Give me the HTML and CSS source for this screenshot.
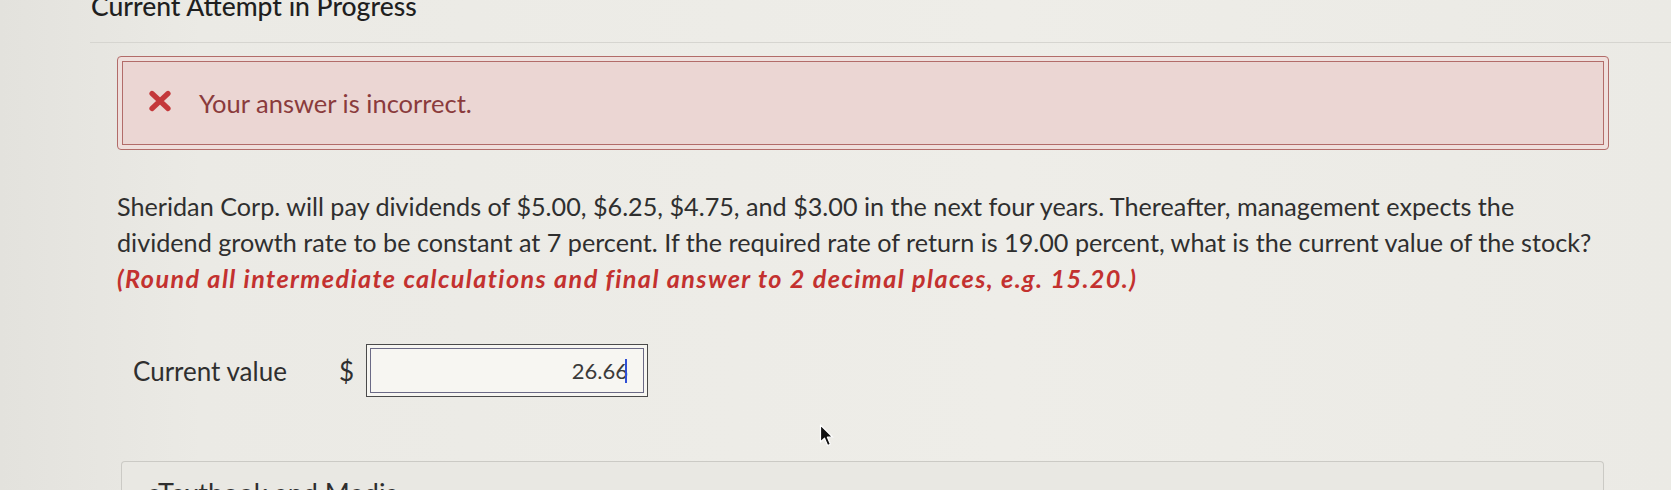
FILE: index.html
```html
<!DOCTYPE html>
<html lang="en">
<head>
<meta charset="utf-8">
<title>Current Attempt in Progress</title>
<link rel="stylesheet" href="styles.css">
</head>
<body>
<div class="page">
  <h1 class="title">Current Attempt in Progress</h1>
  <div class="rule"></div>
  <div class="content">
    <div class="alert">
      <div class="alert-inner">
        <svg class="x-icon" width="24" height="22" viewBox="0 0 24 22" aria-hidden="true">
          <path d="M4 3.5 L20 18.5 M20 3.5 L4 18.5" stroke="#c4383b" stroke-width="5.2" stroke-linecap="round" fill="none"/>
        </svg>
        <span class="alert-text">Your answer is incorrect.</span>
      </div>
    </div>
    <p class="question">Sheridan Corp. will pay dividends of $5.00, $6.25, $4.75, and $3.00 in the next four years. Thereafter, management expects the dividend growth rate to be constant at 7 percent. If the required rate of return is 19.00 percent, what is the current value of the stock?<br><em class="hint">(Round all intermediate calculations and final answer to 2 decimal places, e.g. 15.20.)</em></p>
    <div class="answer-row">
      <span class="label">Current value</span>
      <span class="currency">$</span>
      <div class="input">
        <div class="input-inner"><span class="value">26.66</span><span class="caret"></span></div>
      </div>
    </div>
    <div class="media">
      <span class="media-title">eTextbook and Media</span>
    </div>
  </div>
  <svg class="pointer" width="16" height="24" viewBox="0 0 16 24" aria-hidden="true">
    <path d="M1.5 1 L1.5 18 L5.5 14.2 L8.6 21.5 L11.4 20.3 L8.4 13.2 L13.8 13.2 Z" fill="#111" stroke="#fff" stroke-width="1.2" stroke-linejoin="round"/>
  </svg>
</div>
</body>
</html>
```

FILE: styles.css
```css
html, body {
  margin: 0;
  padding: 0;
}
body {
  background: linear-gradient(90deg, #e3e2dd 0%, #ebeae5 12%, #eeede8 60%, #ebeae5 100%);
  font-family: Lato, "Open Sans", "Noto Sans", sans-serif;
  color: #333;
  width: 1671px;
  height: 490px;
  overflow: hidden;
}
.page {
  position: relative;
  padding-left: 91px;
  height: 490px;
  overflow: hidden;
}
.title {
  margin: -13px 0 0 0;
  font-size: 26.5px;
  line-height: 38px;
  font-weight: 500;
  color: #1f1f1f;
}
.rule {
  margin-top: 17px;
  margin-left: -1px;
  height: 1px;
  background: #d6d5d0;
}
.content {
  margin-left: 26px;
  width: 1492px;
}
.alert {
  margin-top: 13px;
  height: 94px;
  box-sizing: border-box;
  border: 1.5px solid #b26c69;
  border-radius: 4px;
  background: #efdfdc;
  padding: 4px;
}
.alert-inner {
  height: 100%;
  box-sizing: border-box;
  border: 1.5px solid #b26c69;
  background: #ebd6d3;
  display: flex;
  align-items: center;
  padding-left: 25px;
  gap: 27px;
}
.x-icon {
  flex: none;
  margin-top: -4px;
}
.alert-text {
  font-size: 25.5px;
  color: #8a3b3c;
}
.question {
  margin: 38px 0 0 0;
  font-size: 25.2px;
  line-height: 36px;
  color: #2f2f2f;
}
.hint {
  font-weight: 700;
  font-style: italic;
  color: #c3312f;
  letter-spacing: 1.4px;
}
.answer-row {
  margin-top: 48px;
  display: flex;
  align-items: center;
  padding-left: 16px;
  font-size: 26px;
  color: #2f2f2f;
}
.label {
  width: 206px;
}
.currency {
  width: 27px;
}
.input {
  width: 282px;
  height: 53px;
  box-sizing: border-box;
  border: 1.5px solid #4a4a4a;
  padding: 3px;
  background: #f7f6f2;
}
.input-inner {
  height: 100%;
  box-sizing: border-box;
  border: 1.5px solid #6b6a86;
  display: flex;
  align-items: center;
  justify-content: flex-end;
  padding-right: 16px;
}
.value {
  font-size: 22px;
  color: #3a3a3a;
}
.caret {
  width: 2px;
  height: 24px;
  background: #2f4fd6;
  margin-left: -3px;
}
.media {
  margin-top: 64px;
  margin-left: 4px;
  margin-right: 5px;
  height: 60px;
  box-sizing: border-box;
  border: 1.5px solid #cbcac5;
  border-bottom: none;
  border-radius: 4px 4px 0 0;
  background: #e9e8e3;
  padding: 12px 0 0 25px;
}
.media-title {
  font-size: 27px;
  line-height: 38px;
  color: #2f2f2f;
}
.pointer {
  position: absolute;
  left: 819px;
  top: 424px;
}
```
